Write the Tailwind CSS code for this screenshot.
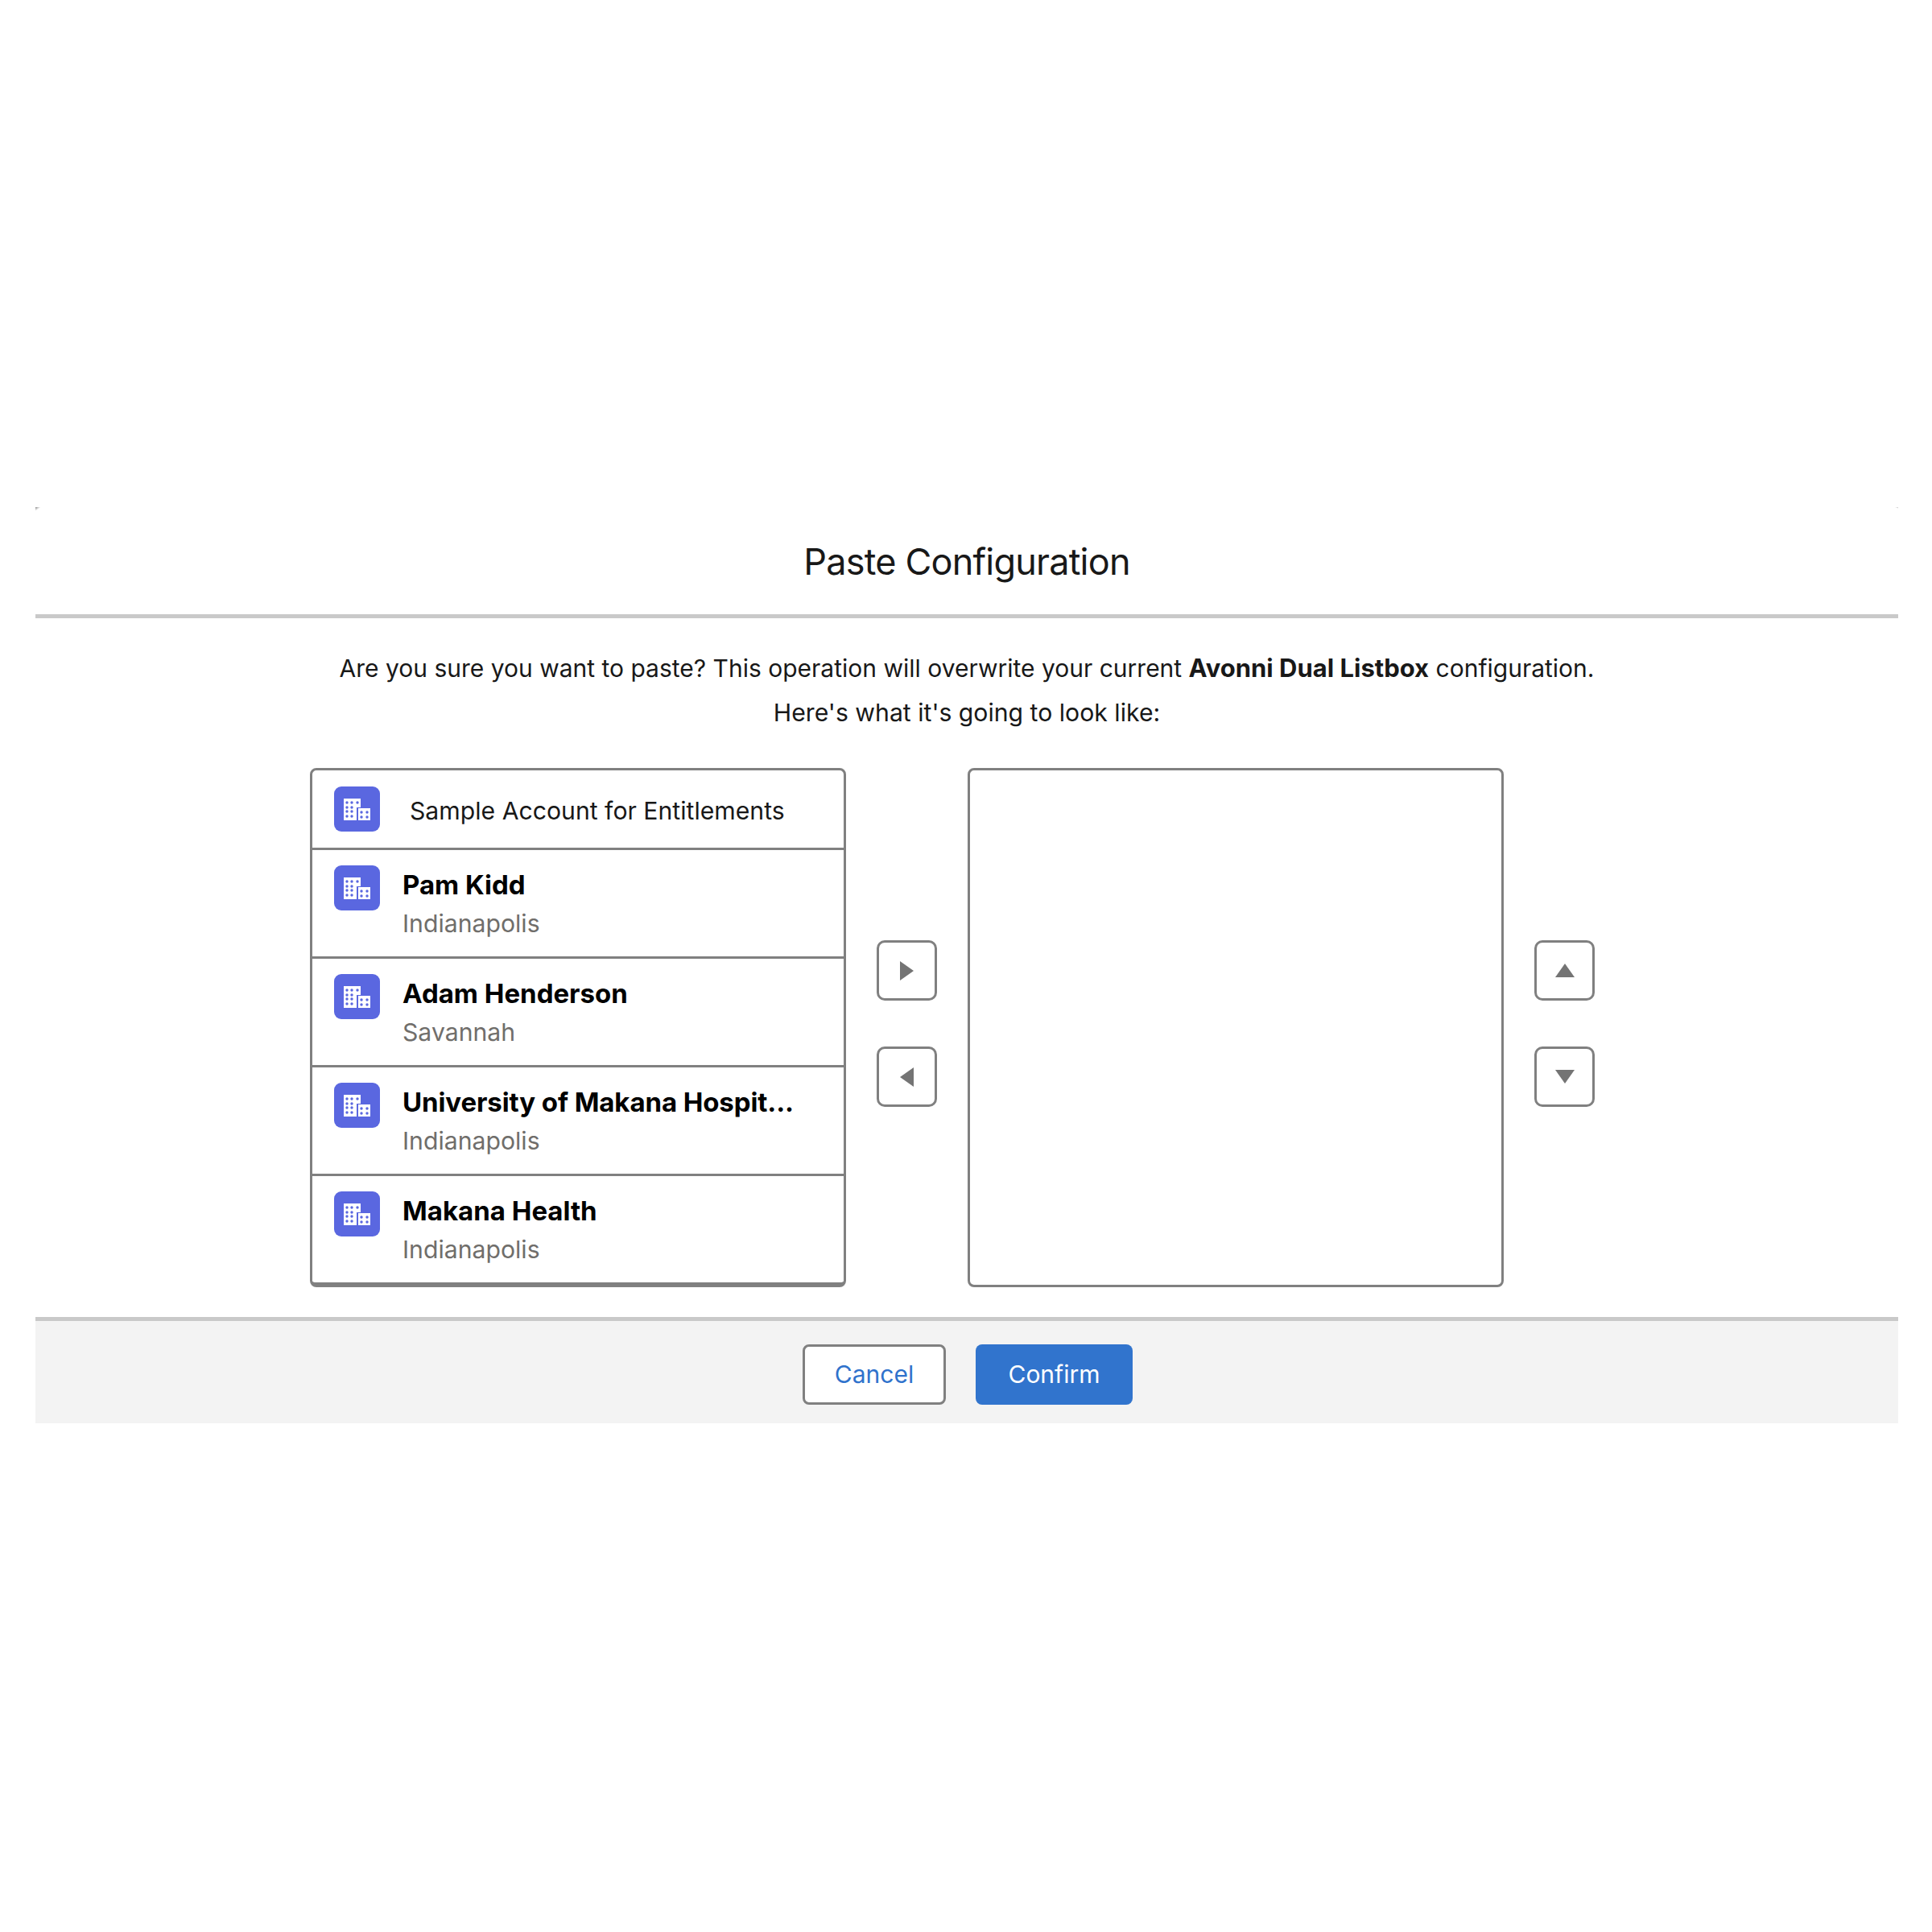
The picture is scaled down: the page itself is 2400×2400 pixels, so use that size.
<!DOCTYPE html>
<html lang="en">
<head>
    <meta charset="UTF-8">
    <title>Paste Configuration</title>
    <script src="https://cdn.jsdelivr.net/npm/@tailwindcss/browser@4"></script>
</head>
<body class="bg-white font-['Inter','Liberation_Sans',sans-serif] text-[#181818]">
    <!-- Account icon, reused by every row -->
    <svg class="hidden">
        <symbol id="account" viewBox="0 0 57 56">
            <rect width="57" height="56" rx="9" fill="#5a67e0"/>
            <path fill="#fff" d="M12 15h21v11h-5v16H12z"/>
            <rect x="30" y="27" width="15" height="15" fill="#fff"/>
            <g fill="#5a67e0">
                <circle cx="16" cy="20" r="1.7"/><circle cx="22" cy="20" r="1.7"/><circle cx="29" cy="20" r="1.7"/>
                <circle cx="16" cy="26" r="1.7"/><circle cx="22" cy="26" r="1.7"/>
                <circle cx="16" cy="31" r="1.7"/><circle cx="22" cy="31" r="1.7"/>
                <circle cx="16" cy="37" r="1.7"/><circle cx="22" cy="37" r="1.7"/>
                <circle cx="34" cy="32" r="1.7"/><circle cx="41" cy="32" r="1.7"/>
                <circle cx="34" cy="38" r="1.7"/><circle cx="41" cy="38" r="1.7"/>
            </g>
        </symbol>
    </svg>

    <div class="w-[2400px] h-[2400px] pt-[630px] px-[44px]">
        <!-- Modal -->
        <div class="relative w-[2314px]">
            <div class="absolute left-0 top-0 w-[7px] h-[5px] bg-gradient-to-br from-[#888] to-white to-50%"></div>
            <div class="absolute right-0 top-0 w-[5px] h-[2px] bg-gradient-to-bl from-[#bbb] to-white to-50%"></div>

            <!-- Header -->
            <header class="h-[138px] border-b-[5px] border-[#c9c9c9] flex items-center justify-center pt-[2px]">
                <h1 class="text-[45px] leading-none font-normal tracking-[-0.8px]">Paste Configuration</h1>
            </header>

            <!-- Body -->
            <div class="h-[868px] pt-[34px]">
                <p class="text-[30px] leading-[55px] text-center">Are you sure you want to paste? This operation will overwrite your current <b class="font-bold text-[31px]">Avonni Dual Listbox</b> configuration.</p>
                <p class="text-[30.2px] leading-[55px] text-center">Here's what it's going to look like:</p>

                <div class="flex mt-[41px] ml-[341px]">
                    <!-- Source list -->
                    <div class="w-[666px] h-[645px] border-[3px] border-b-[6px] border-[#808080] rounded-[8px] overflow-hidden">
                        <div class="h-[99px] border-b-[3px] border-[#808080] pt-[20px] pl-[27px] flex items-start">
                            <svg class="w-[57px] h-[56px] shrink-0"><use href="#account"/></svg>
                            <span class="ml-[37px] mt-[11px] text-[30.2px] leading-[38px] whitespace-nowrap">Sample Account for Entitlements</span>
                        </div>
                        <div class="h-[135px] border-b-[3px] border-[#808080] pt-[19px] pl-[27px] flex items-start">
                            <svg class="w-[57px] h-[56px] shrink-0"><use href="#account"/></svg>
                            <div class="ml-[28px] mt-[4px]">
                                <div class="text-[33px] leading-[40px] font-bold text-black whitespace-nowrap">Pam Kidd</div>
                                <div class="text-[30.2px] leading-[38px] mt-[9px] text-[#706e6b]">Indianapolis</div>
                            </div>
                        </div>
                        <div class="h-[135px] border-b-[3px] border-[#808080] pt-[19px] pl-[27px] flex items-start">
                            <svg class="w-[57px] h-[56px] shrink-0"><use href="#account"/></svg>
                            <div class="ml-[28px] mt-[4px]">
                                <div class="text-[33px] leading-[40px] font-bold text-black whitespace-nowrap">Adam Henderson</div>
                                <div class="text-[30.2px] leading-[38px] mt-[9px] text-[#706e6b]">Savannah</div>
                            </div>
                        </div>
                        <div class="h-[135px] border-b-[3px] border-[#808080] pt-[19px] pl-[27px] flex items-start">
                            <svg class="w-[57px] h-[56px] shrink-0"><use href="#account"/></svg>
                            <div class="ml-[28px] mt-[4px]">
                                <div class="text-[33px] leading-[40px] font-bold text-black whitespace-nowrap tracking-[-0.1px]">University of Makana Hospit...</div>
                                <div class="text-[30.2px] leading-[38px] mt-[9px] text-[#706e6b]">Indianapolis</div>
                            </div>
                        </div>
                        <div class="h-[132px] pt-[19px] pl-[27px] flex items-start">
                            <svg class="w-[57px] h-[56px] shrink-0"><use href="#account"/></svg>
                            <div class="ml-[28px] mt-[4px]">
                                <div class="text-[33px] leading-[40px] font-bold text-black whitespace-nowrap">Makana Health</div>
                                <div class="text-[30.2px] leading-[38px] mt-[9px] text-[#706e6b]">Indianapolis</div>
                            </div>
                        </div>
                    </div>

                    <!-- Move buttons -->
                    <div class="w-[151px] flex flex-col items-center pt-[214px] gap-[57px]">
                        <button class="w-[75px] h-[75px] border-[3px] border-[#808080] rounded-[10px] flex items-center justify-center">
                            <svg class="w-[17px] h-[24px]" viewBox="0 0 17 24"><path fill="#747474" d="M0 0l17 12L0 24z"/></svg>
                        </button>
                        <button class="w-[75px] h-[75px] border-[3px] border-[#808080] rounded-[10px] flex items-center justify-center">
                            <svg class="w-[17px] h-[24px]" viewBox="0 0 17 24"><path fill="#747474" d="M17 0L0 12l17 12z"/></svg>
                        </button>
                    </div>

                    <!-- Target list -->
                    <div class="w-[666px] h-[645px] border-[3px] border-[#808080] rounded-[8px]"></div>

                    <!-- Order buttons -->
                    <div class="w-[151px] flex flex-col items-center pt-[214px] gap-[57px]">
                        <button class="w-[75px] h-[75px] border-[3px] border-[#808080] rounded-[10px] flex items-center justify-center">
                            <svg class="w-[24px] h-[17px]" viewBox="0 0 24 17"><path fill="#747474" d="M0 17L12 0l12 17z"/></svg>
                        </button>
                        <button class="w-[75px] h-[75px] border-[3px] border-[#808080] rounded-[10px] flex items-center justify-center">
                            <svg class="w-[24px] h-[17px]" viewBox="0 0 24 17"><path fill="#747474" d="M0 0l12 17L24 0z"/></svg>
                        </button>
                    </div>
                </div>
            </div>

            <!-- Footer -->
            <footer class="h-[132px] bg-[#f3f3f3] border-t-[5px] border-[#c9c9c9] flex justify-center items-start gap-[37px] pt-[29px] pl-[2px]">
                <button class="w-[178px] h-[75px] bg-white border-[3px] border-[#808080] rounded-[8px] text-[30px] text-[#2f72cc]">Cancel</button>
                <button class="w-[195px] h-[75px] bg-[#3174cd] rounded-[8px] text-[30px] text-white">Confirm</button>
            </footer>
        </div>
    </div>
</body>
</html>
